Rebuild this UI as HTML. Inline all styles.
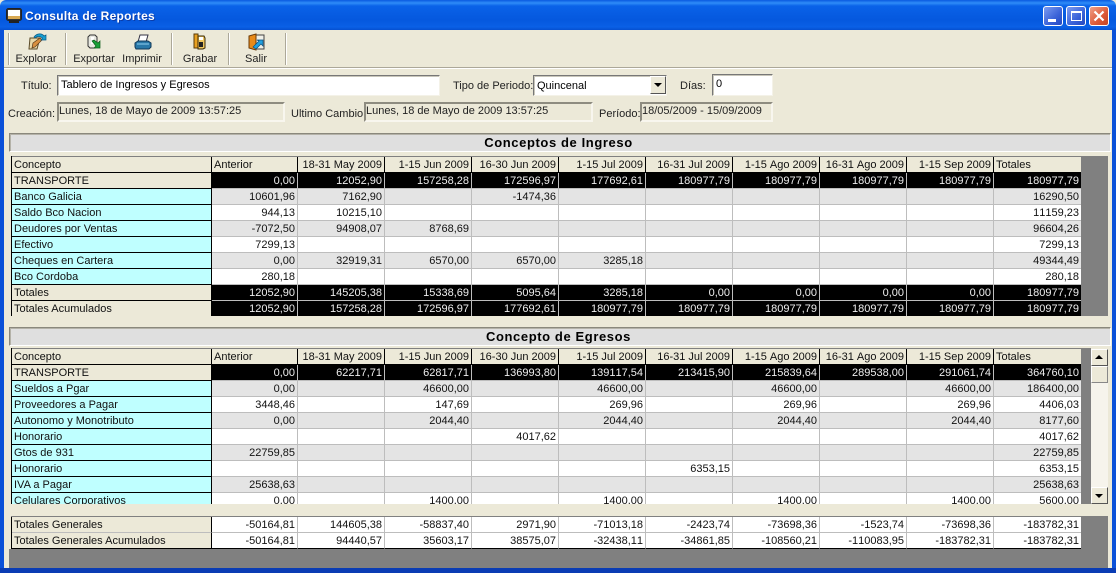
<!DOCTYPE html>
<html><head><meta charset="utf-8"><title>Consulta de Reportes</title>
<style>
html,body{margin:0;padding:0;width:1116px;height:573px;overflow:hidden;background:#ece9d8}
body{position:relative;font:11px/14px "Liberation Sans",Arial,sans-serif;color:#000;font-kerning:none}
.a{position:absolute}
.lbl{position:absolute;white-space:nowrap;color:#222;font-kerning:normal}
.sunk{position:absolute;box-sizing:border-box;border:2px solid;border-color:#8e8c80 #f8f6ee #f8f6ee #8e8c80;background:#ece9d8;padding:1px 0 0 0;white-space:nowrap;color:#222;line-height:13px}
.inp{position:absolute;box-sizing:border-box;background:#fff;border:1px solid;border-color:#777 #f4f2e8 #f4f2e8 #777;box-shadow:inset 1px 1px 0 #c8c6ba;padding:3px 0 0 3px;white-space:nowrap;font-kerning:normal}
.sec{position:absolute;left:9px;width:1102px;height:19px;box-sizing:border-box;background:#dfdfdf;border:1px solid;border-color:#8a887c #fff #fff #8a887c;box-shadow:inset 1px 1px 0 #b4b2a8;text-align:center;padding-right:3px;font:bold 13px/17px "Liberation Sans",Arial,sans-serif;letter-spacing:.6px}
table{position:absolute;border-collapse:separate;border-spacing:0;table-layout:fixed;width:1069px;left:12px}
td{height:13px;padding:2px 2px 0 0;border-right:1px solid #bdbdbd;border-bottom:1px solid #bdbdbd;text-align:right;white-space:nowrap;overflow:hidden;line-height:13px;color:#111;box-sizing:content-box}
td:first-child{text-align:left;padding:2px 0 0 2px;border-right:1px solid #000;border-bottom:1px solid #000;font-kerning:normal}
td:last-child{border-right:0}
tr.h td{background:#ece9d8;border-right:1px solid #000;border-bottom:1px solid #000}
tr.h td:nth-child(2),tr.h td:last-child{text-align:left;padding-left:2px;padding-right:0;font-kerning:normal}
tr.h td:last-child{border-right:0}
tr.k td{background:#000;color:#eee;border-right-color:#bdbdbd;border-bottom-color:#bdbdbd}
tr.k td:first-child,tr.t td:first-child{background:#ece9d8;color:#111;border-right-color:#000;border-bottom-color:#000}
tr.g td{background:#e4e4e4}
tr.w td{background:#fff}
tr.g td:first-child,tr.w td:first-child{background:#bfffff}
tr.t td{background:#fff}
tr.t td:first-child{border-bottom-color:#bdbdbd}
tr.l td,tr.l td:first-child{border-bottom-color:#000}
.tb{position:absolute;top:33px;width:2px;height:32px;border-left:1px solid #aca899;border-right:1px solid #fff;box-sizing:border-box}
.tbl{position:absolute;top:52px;text-align:center;white-space:nowrap;color:#222}
.wb{position:absolute;top:6px;width:20px;height:20px;box-sizing:border-box;border:1px solid #fff;border-radius:3px;background:linear-gradient(135deg,#7c9cf0,#3a62d8 60%,#2448c0)}
</style></head><body>
<!-- window frame -->
<div class="a" style="left:0;top:0;width:1116px;height:30px;background:linear-gradient(#0a5ae0 0,#2f8cf8 3px,#0a62e8 6px,#0558de 20px,#0a60e6 27px,#0550d0 30px);border-radius:6px 6px 0 0"></div>
<div class="a" style="left:0;top:30px;width:4px;height:543px;background:#0a50d8"></div>
<div class="a" style="left:1112px;top:30px;width:4px;height:543px;background:#0a50d8"></div>
<!-- title icon -->
<svg class="a" style="left:6px;top:8px" width="16" height="15" viewBox="0 0 16 15"><rect x="0.5" y="0.5" width="15" height="12" rx="2" fill="#333" stroke="#222"/><rect x="2" y="2" width="12" height="6" fill="#fff"/><rect x="2" y="8" width="12" height="3" fill="#d8a850"/><rect x="3" y="13" width="10" height="2" fill="#222"/></svg>
<div class="a" style="left:25px;top:9px;color:#fff;font:bold 12px/15px 'Liberation Sans',Arial,sans-serif;letter-spacing:.3px;text-shadow:1px 1px 0 #0a3ca8;white-space:nowrap">Consulta de Reportes</div>
<!-- window buttons -->
<div class="wb" style="left:1043px"><div class="a" style="left:4px;top:12px;width:8px;height:3px;background:#fff"></div></div>
<div class="wb" style="left:1066px"><div class="a" style="left:4px;top:4px;width:11px;height:10px;box-sizing:border-box;border:1px solid #fff;border-top-width:2px"></div></div>
<div class="wb" style="left:1089px;background:linear-gradient(135deg,#f0a088,#dc5a38 60%,#c44424)"><svg class="a" style="left:3px;top:3px" width="12" height="12" viewBox="0 0 12 12"><path d="M1.500 1.500L10.500 10.500M10.500 1.500L1.500 10.500" stroke="#fff" stroke-width="2.200"/></svg></div>
<!-- toolbar -->
<div class="a" style="left:4px;top:67px;width:1108px;height:1px;background:#aca899"></div>
<div class="a" style="left:4px;top:68px;width:1108px;height:1px;background:#fff"></div>
<div class="tb" style="left:8px"></div><div class="tb" style="left:65px"></div><div class="tb" style="left:171px"></div><div class="tb" style="left:228px"></div><div class="tb" style="left:285px"></div>
<!-- Explorar -->
<svg class="a" style="left:28px;top:33px" width="19" height="18" viewBox="0 0 19 18"><path d="M2 5h10l-3 11H1z" fill="#e8d8a8" stroke="#5a4a28"/><path d="M5 10l7-5 2 2-7 7-3 1z" fill="#d89040" stroke="#5a3a18" stroke-width=".7"/><path d="M6 4C9 0 14 0 16 3l2-1v5h-5l1.500-2C12 3 9 3 7 5z" fill="#18a0d0" stroke="#0a5a88" stroke-width=".7"/></svg>
<!-- Exportar -->
<svg class="a" style="left:87px;top:34px" width="15" height="17" viewBox="0 0 15 17"><path d="M1 3l2-2h5l2 2v9l-2 2H3l-2-2z" fill="#e8e8e0" stroke="#333"/><path d="M4 3h3v7H4z" fill="#fff"/><path d="M5 7l2-1 4 3 2-2v7H7l2-2z" fill="#18a038" stroke="#0a5a18" stroke-width=".7"/></svg>
<!-- Imprimir -->
<svg class="a" style="left:134px;top:34px" width="18" height="16" viewBox="0 0 18 16"><path d="M6 1h8l-2 7H4z" fill="#fff" stroke="#334"/><path d="M1 9l3-2h10l3 2v4l-2 2H2l-1-2z" fill="#2878a8" stroke="#103858"/><path d="M3 10h12" stroke="#90d0f0"/></svg>
<!-- Grabar -->
<svg class="a" style="left:193px;top:33px" width="13" height="18" viewBox="0 0 13 18"><path d="M1 1h4v14H1z" fill="#e8a020" stroke="#5a3a08"/><path d="M5 3h6l1 2v10l-2 1H5z" fill="#f0c860" stroke="#3a2a08"/><path d="M6 9h4v5H6z" fill="#222"/><path d="M6 4h4v3H6z" fill="#fff"/></svg>
<!-- Salir -->
<svg class="a" style="left:248px;top:33px" width="17" height="18" viewBox="0 0 17 18"><path d="M8 2h8v14H8z" fill="#f0f0e8" stroke="#444"/><path d="M1 3l7-2v16l-7-2z" fill="#e88a18" stroke="#6a3a08"/><path d="M5 14l6-6-2-1h6v6l-2-2-5 5z" fill="#20a0e0" stroke="#0a5080" stroke-width=".7"/></svg>
<div class="tbl" style="left:10px;width:52px">Explorar</div>
<div class="tbl" style="left:68px;width:52px">Exportar</div>
<div class="tbl" style="left:116px;width:52px">Imprimir</div>
<div class="tbl" style="left:174px;width:52px">Grabar</div>
<div class="tbl" style="left:230px;width:52px">Salir</div>
<!-- form -->
<div class="lbl" style="left:21px;top:79px">Título:</div>
<div class="inp" style="left:57px;top:75px;width:383px;height:21px;line-height:13px">Tablero de Ingresos y Egresos</div>
<div class="lbl" style="left:453px;top:79px">Tipo de Periodo:</div>
<div class="inp" style="left:533px;top:75px;width:134px;height:21px;line-height:14px">Quincenal</div>
<div class="a" style="left:650px;top:76px;width:16px;height:18px;box-sizing:border-box;background:#ece9d8;border:1px solid;border-color:#fff #555 #555 #fff"><div class="a" style="left:3px;top:6px;width:0;height:0;border:4px solid transparent;border-top:4px solid #000;border-bottom:0"></div></div>
<div class="lbl" style="left:680px;top:79px">Días:</div>
<div class="inp" style="left:712px;top:74px;width:61px;height:22px;line-height:13px">0</div>
<div class="lbl" style="left:8px;top:107px">Creación:</div>
<div class="sunk" style="left:57px;top:102px;width:228px;height:20px">Lunes, 18 de Mayo de 2009 13:57:25</div>
<div class="lbl" style="left:291px;top:107px">Ultimo Cambio:</div>
<div class="sunk" style="left:364px;top:102px;width:229px;height:20px">Lunes, 18 de Mayo de 2009 13:57:25</div>
<div class="lbl" style="left:599px;top:107px">Período:</div>
<div class="sunk" style="left:640px;top:102px;width:133px;height:20px">18/05/2009 - 15/09/2009</div>
<!-- Ingreso -->
<div class="sec" style="top:133px">Conceptos de Ingreso</div>
<div class="a" style="left:11px;top:156px;width:1097px;height:160px;background:#808080"></div>
<div class="a" style="left:11px;top:156px;width:1070px;height:160px;overflow:hidden;border-left:1px solid #000;box-sizing:border-box">
<table style="top:1px;left:0">
<colgroup><col style="width:200px"><col style="width:86px"><col style="width:87px"><col style="width:87px"><col style="width:87px"><col style="width:87px"><col style="width:87px"><col style="width:87px"><col style="width:87px"><col style="width:87px"><col style="width:87px"></colgroup>
<tr class="h"><td>Concepto</td><td>Anterior</td><td>18-31 May 2009</td><td>1-15 Jun 2009</td><td>16-30 Jun 2009</td><td>1-15 Jul 2009</td><td>16-31 Jul 2009</td><td>1-15 Ago 2009</td><td>16-31 Ago 2009</td><td>1-15 Sep 2009</td><td>Totales</td></tr>
<tr class="k"><td>TRANSPORTE</td><td>0,00</td><td>12052,90</td><td>157258,28</td><td>172596,97</td><td>177692,61</td><td>180977,79</td><td>180977,79</td><td>180977,79</td><td>180977,79</td><td>180977,79</td></tr>
<tr class="g"><td>Banco Galicia</td><td>10601,96</td><td>7162,90</td><td></td><td>-1474,36</td><td></td><td></td><td></td><td></td><td></td><td>16290,50</td></tr>
<tr class="w"><td>Saldo Bco Nacion</td><td>944,13</td><td>10215,10</td><td></td><td></td><td></td><td></td><td></td><td></td><td></td><td>11159,23</td></tr>
<tr class="g"><td>Deudores por Ventas</td><td>-7072,50</td><td>94908,07</td><td>8768,69</td><td></td><td></td><td></td><td></td><td></td><td></td><td>96604,26</td></tr>
<tr class="w"><td>Efectivo</td><td>7299,13</td><td></td><td></td><td></td><td></td><td></td><td></td><td></td><td></td><td>7299,13</td></tr>
<tr class="g"><td>Cheques en Cartera</td><td>0,00</td><td>32919,31</td><td>6570,00</td><td>6570,00</td><td>3285,18</td><td></td><td></td><td></td><td></td><td>49344,49</td></tr>
<tr class="w"><td>Bco Cordoba</td><td>280,18</td><td></td><td></td><td></td><td></td><td></td><td></td><td></td><td></td><td>280,18</td></tr>
<tr class="k"><td>Totales</td><td>12052,90</td><td>145205,38</td><td>15338,69</td><td>5095,64</td><td>3285,18</td><td>0,00</td><td>0,00</td><td>0,00</td><td>0,00</td><td>180977,79</td></tr>
<tr class="k"><td>Totales Acumulados</td><td>12052,90</td><td>157258,28</td><td>172596,97</td><td>177692,61</td><td>180977,79</td><td>180977,79</td><td>180977,79</td><td>180977,79</td><td>180977,79</td><td>180977,79</td></tr>
</table>
</div>
<!-- Egresos -->
<div class="sec" style="top:327px">Concepto de Egresos</div>
<div class="a" style="left:1081px;top:348px;width:10px;height:156px;background:#808080"></div>
<div class="a" style="left:11px;top:348px;width:1070px;height:156px;overflow:hidden;border-left:1px solid #000;box-sizing:border-box;background:#808080">
<table style="top:1px;left:0">
<colgroup><col style="width:200px"><col style="width:86px"><col style="width:87px"><col style="width:87px"><col style="width:87px"><col style="width:87px"><col style="width:87px"><col style="width:87px"><col style="width:87px"><col style="width:87px"><col style="width:87px"></colgroup>
<tr class="h"><td>Concepto</td><td>Anterior</td><td>18-31 May 2009</td><td>1-15 Jun 2009</td><td>16-30 Jun 2009</td><td>1-15 Jul 2009</td><td>16-31 Jul 2009</td><td>1-15 Ago 2009</td><td>16-31 Ago 2009</td><td>1-15 Sep 2009</td><td>Totales</td></tr>
<tr class="k"><td>TRANSPORTE</td><td>0,00</td><td>62217,71</td><td>62817,71</td><td>136993,80</td><td>139117,54</td><td>213415,90</td><td>215839,64</td><td>289538,00</td><td>291061,74</td><td>364760,10</td></tr>
<tr class="g"><td>Sueldos a Pgar</td><td>0,00</td><td></td><td>46600,00</td><td></td><td>46600,00</td><td></td><td>46600,00</td><td></td><td>46600,00</td><td>186400,00</td></tr>
<tr class="w"><td>Proveedores a Pagar</td><td>3448,46</td><td></td><td>147,69</td><td></td><td>269,96</td><td></td><td>269,96</td><td></td><td>269,96</td><td>4406,03</td></tr>
<tr class="g"><td>Autonomo y Monotributo</td><td>0,00</td><td></td><td>2044,40</td><td></td><td>2044,40</td><td></td><td>2044,40</td><td></td><td>2044,40</td><td>8177,60</td></tr>
<tr class="w"><td>Honorario</td><td></td><td></td><td></td><td>4017,62</td><td></td><td></td><td></td><td></td><td></td><td>4017,62</td></tr>
<tr class="g"><td>Gtos de 931</td><td>22759,85</td><td></td><td></td><td></td><td></td><td></td><td></td><td></td><td></td><td>22759,85</td></tr>
<tr class="w"><td>Honorario</td><td></td><td></td><td></td><td></td><td></td><td>6353,15</td><td></td><td></td><td></td><td>6353,15</td></tr>
<tr class="g"><td>IVA a Pagar</td><td>25638,63</td><td></td><td></td><td></td><td></td><td></td><td></td><td></td><td></td><td>25638,63</td></tr>
<tr class="w"><td>Celulares Corporativos</td><td>0,00</td><td></td><td>1400,00</td><td></td><td>1400,00</td><td></td><td>1400,00</td><td></td><td>1400,00</td><td>5600,00</td></tr>
</table>
</div>
<!-- scrollbar -->
<div class="a" style="left:1091px;top:349px;width:17px;height:155px;background:#f6f4ec"></div>
<div class="a" style="left:1091px;top:349px;width:17px;height:17px;box-sizing:border-box;background:#ece9d8;border:1px solid;border-color:#fff #555 #555 #fff"><div class="a" style="left:3px;top:5px;width:0;height:0;border:4px solid transparent;border-bottom:4px solid #000;border-top:0"></div></div>
<div class="a" style="left:1091px;top:366px;width:17px;height:17px;box-sizing:border-box;background:#ece9d8;border:1px solid;border-color:#fff #888 #888 #fff"></div>
<div class="a" style="left:1091px;top:487px;width:17px;height:17px;box-sizing:border-box;background:#ece9d8;border:1px solid;border-color:#fff #555 #555 #fff"><div class="a" style="left:3px;top:6px;width:0;height:0;border:4px solid transparent;border-top:4px solid #000;border-bottom:0"></div></div>
<!-- totals -->
<div class="a" style="left:11px;top:516px;width:1097px;height:52px;background:#808080"></div>
<div class="a" style="left:9px;top:549px;width:1099px;height:19px;background:#808080"></div>
<div class="a" style="left:11px;top:517px;width:1px;height:32px;background:#000"></div>
<table style="top:517px">
<colgroup><col style="width:200px"><col style="width:86px"><col style="width:87px"><col style="width:87px"><col style="width:87px"><col style="width:87px"><col style="width:87px"><col style="width:87px"><col style="width:87px"><col style="width:87px"><col style="width:87px"></colgroup>
<tr class="t"><td>Totales Generales</td><td>-50164,81</td><td>144605,38</td><td>-58837,40</td><td>2971,90</td><td>-71013,18</td><td>-2423,74</td><td>-73698,36</td><td>-1523,74</td><td>-73698,36</td><td>-183782,31</td></tr>
<tr class="t l"><td>Totales Generales Acumulados</td><td>-50164,81</td><td>94440,57</td><td>35603,17</td><td>38575,07</td><td>-32438,11</td><td>-34861,85</td><td>-108560,21</td><td>-110083,95</td><td>-183782,31</td><td>-183782,31</td></tr>
</table>
<div class="a" style="left:0;top:568px;width:1116px;height:5px;background:#0a3cb4"></div>
</body></html>
